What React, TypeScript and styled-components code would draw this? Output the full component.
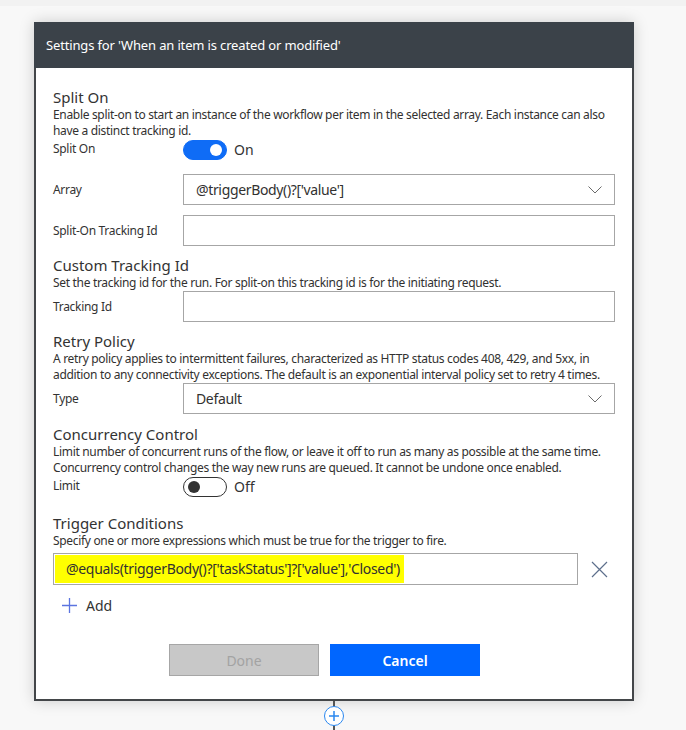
import React from 'react'
import styled, { createGlobalStyle } from 'styled-components'

const GlobalStyle = createGlobalStyle`
  html, body {
    margin: 0;
    padding: 0;
    background: #f8f8f8;
  }
  body {
    font-family: 'Noto Sans', 'Open Sans', sans-serif;
    color: #323130;
  }
`

const Page = styled.div`
  min-height: 730px;
  background: linear-gradient(to bottom, #f2f2f2 0, #f2f2f2 6px, #f8f8f8 6px);
  padding-top: 22px;
  padding-left: 34px;
  box-sizing: border-box;
  overflow: hidden;
`

const Column = styled.div`
  width: 600px;
  display: flex;
  flex-direction: column;
  align-items: center;
`

const Panel = styled.div`
  width: 600px;
  box-sizing: border-box;
  background: #fff;
  border: 2px solid #434649;
  border-top: none;
  box-shadow: 0 0 14px rgba(0, 0, 0, 0.18);
`

const Header = styled.div`
  height: 46px;
  margin: 0 -2px;
  background: #3b4249;
  color: #fff;
  font-size: 13px;
  letter-spacing: -0.15px;
  display: flex;
  align-items: center;
  padding-left: 12px;
`

const Body = styled.div`
  padding: 19px 17px 23px 17px;
`

const Section = styled.div<{ gap?: number }>`
  margin-top: ${(p) => p.gap ?? 0}px;
`

const Title = styled.div`
  font-size: 15px;
  line-height: 20px;
  color: #333;
`

const Desc = styled.div`
  font-size: 12px;
  line-height: 16px;
  letter-spacing: -0.32px;
  color: #323130;
  white-space: nowrap;
`

const Row = styled.div<{ top?: number }>`
  display: flex;
  align-items: center;
  margin-top: ${(p) => p.top ?? 0}px;
`

const Label = styled.div`
  width: 130px;
  flex: none;
  font-size: 12px;
  line-height: 16px;
  letter-spacing: -0.3px;
  color: #333;
`

const ToggleRow = styled.div`
  display: flex;
  align-items: flex-start;
  height: 22px;
  ${Label} {
    padding-top: 2px;
  }
`

const Switch = styled.div<{ on?: boolean }>`
  width: 44px;
  height: 20px;
  box-sizing: border-box;
  border-radius: 10px;
  margin-top: 1px;
  display: flex;
  align-items: center;
  justify-content: ${(p) => (p.on ? 'flex-end' : 'flex-start')};
  padding: 0 4px;
  background: ${(p) => (p.on ? '#0f6cf6' : '#fff')};
  border: 1px solid ${(p) => (p.on ? '#0f6cf6' : '#333')};
  &::after {
    content: '';
    width: 12px;
    height: 12px;
    border-radius: 50%;
    background: ${(p) => (p.on ? '#fff' : '#333')};
  }
`

const SwitchText = styled.span`
  font-size: 14px;
  line-height: 20px;
  margin-left: 7px;
  margin-top: 1px;
  color: #333;
`

const Field = styled.div`
  flex: 1;
  height: 31px;
  box-sizing: border-box;
  border: 1px solid #a6a6a6;
  display: flex;
  align-items: center;
  padding: 0 12px;
  font-size: 14px;
  letter-spacing: -0.35px;
  color: #323130;
  background: #fff;
`

const FieldText = styled.span`
  flex: 1;
  white-space: nowrap;
`

const ConditionRow = styled.div`
  display: flex;
  align-items: center;
  margin-top: 4px;
`

const ConditionField = styled.div`
  width: 530px;
  height: 32px;
  box-sizing: border-box;
  border: 1px solid #a6a6a6;
  padding: 1px;
  display: flex;
`

const Highlight = styled.span`
  background: #ffff00;
  padding: 0 4px 0 11px;
  font-size: 14px;
  line-height: 28px;
  letter-spacing: -0.32px;
  color: #323130;
  white-space: nowrap;
`

const RemoveButton = styled.div`
  width: 32px;
  display: flex;
  justify-content: center;
  margin-left: 5px;
`

const AddRow = styled.div`
  display: flex;
  align-items: center;
  margin-top: 11px;
  padding-left: 9px;
  font-size: 14px;
  color: #333;
  gap: 9px;
`

const Buttons = styled.div`
  display: flex;
  gap: 11px;
  margin-top: 29px;
  padding-left: 116px;
`

const Button = styled.button<{ primary?: boolean }>`
  width: 150px;
  height: 32px;
  box-sizing: border-box;
  font-family: 'Noto Sans', 'Open Sans', sans-serif;
  font-size: 14px;
  font-weight: ${(p) => (p.primary ? 600 : 400)};
  color: ${(p) => (p.primary ? '#fff' : '#a3a3a3')};
  background: ${(p) => (p.primary ? '#0066ff' : '#c8c8c8')};
  border: 1px solid ${(p) => (p.primary ? '#0066ff' : '#a6a6a6')};
  padding: 0;
`

const Connector = styled.div`
  width: 2px;
  height: 29px;
  background: #555;
  position: relative;
  margin-left: -1px;
`

const AddNode = styled.div`
  position: absolute;
  left: -9px;
  top: 5px;
  width: 20px;
  height: 20px;
  box-sizing: border-box;
  border-radius: 50%;
  border: 1px solid #2b88f0;
  background: #fff;
  display: flex;
  align-items: center;
  justify-content: center;
`

const Chevron = () => (
  <svg width="14" height="8" viewBox="0 0 14 8">
    <path d="M0.5 0.5 L7 7 L13.5 0.5" fill="none" stroke="#6b6b6b" strokeWidth="1" />
  </svg>
)

const Toggle = ({ on }: { on?: boolean }) => (
  <>
    <Switch on={on} />
    <SwitchText>{on ? 'On' : 'Off'}</SwitchText>
  </>
)

export default function App() {
  return (
    <Page>
      <GlobalStyle />
      <Column>
        <Panel>
          <Header>Settings for 'When an item is created or modified'</Header>
          <Body>
            <Section>
              <Title>Split On</Title>
              <Desc>
                Enable split-on to start an instance of the workflow per item in the selected array. Each instance can also
                <br />
                have a distinct tracking id.
              </Desc>
              <ToggleRow>
                <Label>Split On</Label>
                <Toggle on />
              </ToggleRow>
              <Row top={13}>
                <Label>Array</Label>
                <Field>
                  <FieldText>@triggerBody()?['value']</FieldText>
                  <Chevron />
                </Field>
              </Row>
              <Row top={10}>
                <Label>Split-On Tracking Id</Label>
                <Field />
              </Row>
            </Section>

            <Section gap={9}>
              <Title>Custom Tracking Id</Title>
              <Desc>Set the tracking id for the run. For split-on this tracking id is for the initiating request.</Desc>
              <Row>
                <Label>Tracking Id</Label>
                <Field />
              </Row>
            </Section>

            <Section gap={9}>
              <Title>Retry Policy</Title>
              <Desc>
                A retry policy applies to intermittent failures, characterized as HTTP status codes 408, 429, and 5xx, in
                <br />
                addition to any connectivity exceptions. The default is an exponential interval policy set to retry 4 times.
              </Desc>
              <Row>
                <Label>Type</Label>
                <Field>
                  <FieldText>Default</FieldText>
                  <Chevron />
                </Field>
              </Row>
            </Section>

            <Section gap={10}>
              <Title>Concurrency Control</Title>
              <Desc>
                Limit number of concurrent runs of the flow, or leave it off to run as many as possible at the same time.
                <br />
                Concurrency control changes the way new runs are queued. It cannot be undone once enabled.
              </Desc>
              <ToggleRow>
                <Label>Limit</Label>
                <Toggle />
              </ToggleRow>
            </Section>

            <Section gap={15}>
              <Title>Trigger Conditions</Title>
              <Desc>Specify one or more expressions which must be true for the trigger to fire.</Desc>
              <ConditionRow>
                <ConditionField>
                  <Highlight>@equals(triggerBody()?['taskStatus']?['value'],'Closed')</Highlight>
                </ConditionField>
                <RemoveButton>
                  <svg width="17" height="17" viewBox="0 0 17 17">
                    <path d="M1 1 L16 16 M16 1 L1 16" stroke="#5d6f8c" strokeWidth="1.2" fill="none" />
                  </svg>
                </RemoveButton>
              </ConditionRow>
              <AddRow>
                <svg width="15" height="15" viewBox="0 0 15 15">
                  <path d="M7.5 0 V15 M0 7.5 H15" stroke="#5b74e0" strokeWidth="1.3" fill="none" />
                </svg>
                Add
              </AddRow>
            </Section>

            <Buttons>
              <Button disabled>Done</Button>
              <Button primary>Cancel</Button>
            </Buttons>
          </Body>
        </Panel>
        <Connector>
          <AddNode>
            <svg width="12" height="12" viewBox="0 0 12 12">
              <path d="M6 1 V11 M1 6 H11" stroke="#2b88f0" strokeWidth="1.5" fill="none" />
            </svg>
          </AddNode>
        </Connector>
      </Column>
    </Page>
  )
}
